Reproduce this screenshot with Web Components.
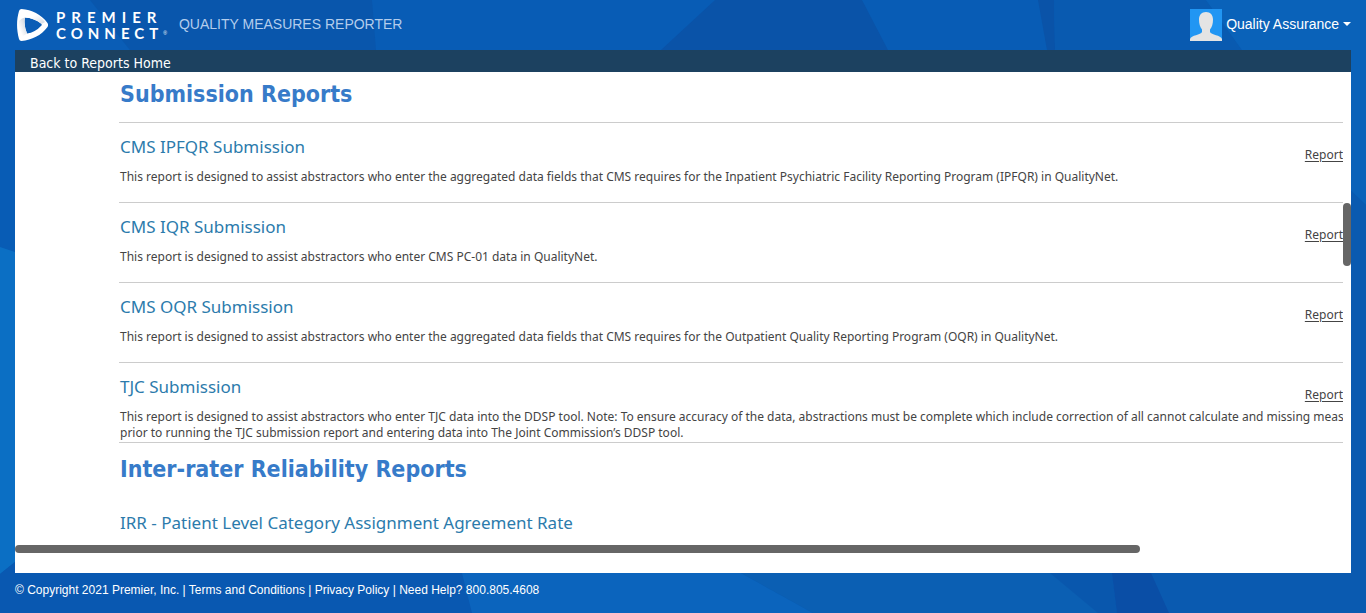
<!DOCTYPE html>
<html lang="en">
<head>
<meta charset="utf-8">
<title>Quality Measures Reporter</title>
<style>
  html, body { margin: 0; height: 100%; }
  body { font-family: "Liberation Sans", Arial, sans-serif; color: #fff; }
</style>
</head>
<body>
<qm-app>
  <qm-header slot="header" heading="QUALITY MEASURES REPORTER" user="Quality Assurance"></qm-header>
  <qm-subnav slot="nav" href="#home">Back to Reports Home</qm-subnav>
  <qm-scroller slot="main">
    <qm-section heading="Submission Reports" ruled>
      <qm-report name="CMS IPFQR Submission">This report is designed to assist abstractors who enter the aggregated data fields that CMS requires for the Inpatient Psychiatric Facility Reporting Program (IPFQR) in QualityNet.</qm-report>
      <qm-report name="CMS IQR Submission">This report is designed to assist abstractors who enter CMS PC-01 data in QualityNet.</qm-report>
      <qm-report name="CMS OQR Submission">This report is designed to assist abstractors who enter the aggregated data fields that CMS requires for the Outpatient Quality Reporting Program (OQR) in QualityNet.</qm-report>
      <qm-report name="TJC Submission">This report is designed to assist abstractors who enter TJC data into the DDSP tool. Note: To ensure accuracy of the data, abstractions must be complete which include correction of all cannot calculate and missing measures<br>prior to running the TJC submission report and entering data into The Joint Commission’s DDSP tool.</qm-report>
    </qm-section>
    <qm-section heading="Inter-rater Reliability Reports">
      <qm-report name="IRR - Patient Level Category Assignment Agreement Rate" bare></qm-report>
    </qm-section>
  </qm-scroller>
  <qm-footer slot="footer"></qm-footer>
</qm-app>

<script>
const define = (name, markup, setup) => {
  const template = document.createElement('template');
  template.innerHTML = markup;
  customElements.define(name, class extends HTMLElement {
    connectedCallback() {
      if (this.shadowRoot) return;
      const root = this.attachShadow({ mode: 'open' });
      root.append(template.content.cloneNode(true));
      if (setup) setup(this, root);
    }
  });
};

define('qm-backdrop', `
  <style>
    :host { display: block; overflow: hidden; }
    svg { display: block; width: 100%; height: 100%; }
  </style>
  <svg viewBox="0 0 1366 613" preserveAspectRatio="none" aria-hidden="true">
    <rect width="1366" height="613" fill="#085cb5"/>
    <path d="M0 0H90L130 50H0z" fill="#0a5db6"/>
    <path d="M90 0H372L376 50H130z" fill="#0956ac"/>
    <path d="M715 0H862L888 50H661z" fill="#0a53a8"/>
    <path d="M1038 0H1054L1055 50H1047z" fill="#0a53a8"/>
    <path d="M1054 0H1206L1242 50H1055z" fill="#095ab0"/>
    <path d="M1206 0H1366V205L1350 190L1242 50z" fill="#0a62b9"/>
    <path d="M1350 190L1366 205V613H1150V573z" fill="#0a5ab0"/>
    <path d="M0 247L15 252V562L0 574z" fill="#0b6fc4"/>
    <path d="M0 574L15 562V573H462L472 613H0z" fill="#0958b1"/>
    <path d="M462 573H741L813 613H472z" fill="#0b64bd"/>
    <path d="M741 573H1050L1120 613H813z" fill="#0b5fb3"/>
    <path d="M1050 573H1112L1117 613H1098z" fill="#0957ad"/>
    <path d="M1112 573H1151L1169 613H1117z" fill="#0a4ea6"/>
  </svg>`);

define('qm-app', `
  <style>
    :host { display: grid; min-height: 100vh; }
    qm-backdrop, .shell { grid-area: 1 / 1; }
    qm-backdrop { height: 0; min-height: 100%; }
    .shell { display: flex; flex-direction: column; position: relative; min-width: 0; padding: 0 15px; }
    main { flex: 1; display: flex; min-width: 0; background: #fff; padding-bottom: 20px; }
  </style>
  <qm-backdrop></qm-backdrop>
  <div class="shell">
    <slot name="header"></slot>
    <slot name="nav"></slot>
    <main><slot name="main"></slot></main>
    <slot name="footer"></slot>
  </div>`);

define('qm-logo', `
  <style>
    :host { display: flex; align-items: center; gap: 7px; color: #fff; }
    svg { display: block; }
    .mark { padding-left: 2px; }
    .word { font: 700 15px/16px Lato, sans-serif; }
    .word span { display: block; }
    .top { letter-spacing: 6px; }
    .bottom { letter-spacing: 5px; }
    sup { font: 5px/5px "Liberation Sans", sans-serif; letter-spacing: 0; vertical-align: 4px; }
  </style>
  <svg class="mark" width="32" height="32" viewBox="0 0 32 32" aria-hidden="true">
    <defs>
      <linearGradient id="a" x1="0" y1="0" x2="1" y2="1"><stop offset=".5" stop-color="#fff"/><stop offset="1" stop-color="#d3d9e1"/></linearGradient>
      <linearGradient id="b" x1="1" y1="0" x2="0" y2="1"><stop offset=".2" stop-color="#d3d9e1"/><stop offset=".7" stop-color="#fff"/></linearGradient>
    </defs>
    <path fill="#fff" fill-rule="evenodd" d="M4.500 0C15 1 24 5 30.500 14Q31.700 16 30.500 18C24 26.500 15 31 4.500 32Q2.500 32 2 30C-.6 20 -.6 11 2 2Q2.600 0 4.500 0zM8 8.500Q6.500 16 10 24.500Q18 23.500 24.500 16.500Q25.200 15.500 24 14.500Q17 9 8 8.500z"/>
    <path fill="url(#a)" d="M4.500 1C14 2 22 5 28 13L24.500 15Q17 9 8 8.500Q4 9 2 3z"/>
    <path fill="url(#b)" d="M2 12Q4 9 8 8.500Q6.500 16 10 24.500Q5 27 3 30Q0 21 2 12z"/>
  </svg>
  <div class="word"><span class="top">PREMIER</span><span class="bottom">CONNECT<sup>®</sup></span></div>`);

define('qm-header', `
  <style>
    :host { display: flex; flex: none; align-items: center; height: 50px; }
    h1 { margin: 0 auto 0 12px; padding-bottom: 2px; font: 14px/20px "Liberation Sans", Arial, sans-serif; color: #b3cdec; }
    button { display: flex; align-items: center; gap: 4px; padding: 0; border: 0; background: none; color: #fff; font: 14px/20px "Liberation Sans", Arial, sans-serif; white-space: nowrap; }
    span { padding-bottom: 2px; }
    svg { display: block; }
  </style>
  <qm-logo></qm-logo>
  <h1></h1>
  <button type="button" aria-haspopup="menu">
    <svg width="32" height="32" viewBox="0 0 32 32" aria-hidden="true">
      <rect width="32" height="32" fill="#2196f3"/>
      <path fill="#e4e4e4" d="M16 3C20.500 3 23 6 23 10.500C23 15 22 18 20 20.500V23C21 26 31 26 32 30V32H0V30C1 26 11 26 12 23V20.500C10 18 9 15 9 10.500C9 6 11.500 3 16 3z"/>
    </svg>
    <span></span>
    <svg width="8" height="6" viewBox="0 0 8 6" aria-hidden="true"><path d="M0 0H8L4 4z" fill="#fff"/></svg>
  </button>`, (host, root) => {
    root.querySelector('h1').textContent = host.getAttribute('heading');
    root.querySelector('span').textContent = host.getAttribute('user');
  });

define('qm-subnav', `
  <style>
    :host { display: block; flex: none; background: #1c4160; padding: 4px 15px 0; }
    a { display: block; width: max-content; font: 14px/18px "DejaVu Sans Condensed", Tahoma, sans-serif; color: #fff; text-decoration: none; }
  </style>
  <a><slot></slot></a>`, (host, root) => {
    root.querySelector('a').href = host.getAttribute('href');
  });

define('qm-scroller', `
  <style>
    :host { flex: 1; min-width: 0; display: grid; grid-template: 1fr 8px / 1fr 8px; }
    .view { overflow: hidden; min-width: 0; padding-left: 104px; }
    .thumb { background: #666; border-radius: 4px; }
    .track-y { display: grid; grid-template-rows: 131fr 63fr 279fr; }
    .track-y .thumb { grid-row: 2; }
    .track-x { display: grid; grid-template-columns: 1125fr 203fr; }
  </style>
  <div class="view"><slot></slot></div>
  <div class="track-y"><div class="thumb"></div></div>
  <div class="track-x"><div class="thumb"></div></div>`);

define('qm-section', `
  <style>
    :host { display: block; }
    h2 { margin: 0; padding: 11px 1px 14px; border-bottom: 1px solid transparent; font: bold 23px/30px "DejaVu Sans Condensed", Tahoma, sans-serif; color: #377bc9; white-space: nowrap; }
    :host([ruled]) h2 { padding: 7px 1px 13px; border-color: #ccc; }
  </style>
  <h2></h2>
  <slot></slot>`, (host, root) => {
    root.querySelector('h2').textContent = host.getAttribute('heading');
  });

define('qm-report', `
  <style>
    :host { display: grid; grid-template-columns: minmax(0, 1fr) auto; border-bottom: 1px solid #ccc; white-space: nowrap; }
    h3 { margin: 0; padding: 13px 1px 11px; font: 17px/22px "Noto Sans", Tahoma, sans-serif; }
    h3 a { color: #2c7bac; text-decoration: none; }
    .more { padding-top: 24px; font: 12px/16px "Noto Sans", Tahoma, sans-serif; color: #444; text-underline-offset: 2px; }
    p { grid-column: 1 / -1; min-width: 0; min-height: 33px; margin: 0; padding: 0 1px; font: 12px/16px "Noto Sans", Tahoma, sans-serif; color: #444; }
    :host([bare]) { border: 0; }
    :host([bare]) h3 { padding-bottom: 8px; }
    :host([bare]) .more, :host([bare]) p { display: none; }
  </style>
  <h3><a href="#report"></a></h3>
  <a class="more" href="#more">Report</a>
  <p><slot></slot></p>`, (host, root) => {
    root.querySelector('h3 a').textContent = host.getAttribute('name');
  });

define('qm-footer', `
  <style>
    :host { display: block; flex: none; height: 40px; font-size: 12px; line-height: 34px; white-space: nowrap; }
    a { color: #fff; text-decoration: none; }
  </style>
  © Copyright 2021 Premier, Inc. | <a href="#terms">Terms and Conditions</a> | <a href="#privacy">Privacy Policy</a> | Need Help? 800.805.4608`);
</script>
</body>
</html>
